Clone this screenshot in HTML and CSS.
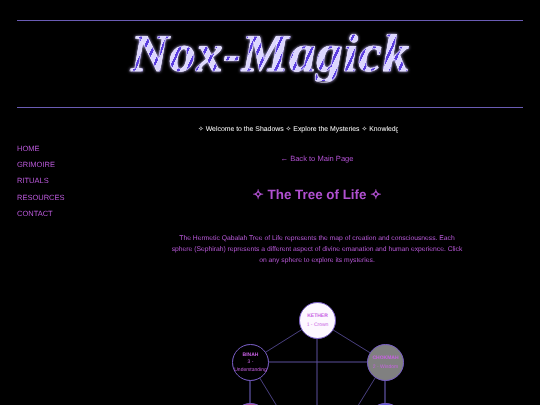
FILE: index.html
```html
<!DOCTYPE html>
<html lang="en">
<head>
<meta charset="utf-8">
<title>The Tree of Life</title>
<link rel="stylesheet" href="styles.css">
</head>
<body>
<div class="page">
  <header class="banner">
    <h1 class="logo">Nox-Magick</h1>
  </header>
  <div class="columns">
    <nav class="side">
      <a href="#">HOME</a>
      <a href="#">GRIMOIRE</a>
      <a href="#">RITUALS</a>
      <a href="#">RESOURCES</a>
      <a href="#">CONTACT</a>
    </nav>
    <main class="content">
      <div class="ticker"><span>✧ Welcome to the Shadows ✧ Explore the Mysteries ✧ Knowledge is Power ✧</span></div>
      <a class="back" href="#">← Back to Main Page</a>
      <h2 class="title">✧ The Tree of Life ✧</h2>
      <p class="intro">The Hermetic Qabalah Tree of Life represents the map of creation and consciousness. Each sphere (Sephirah) represents a different aspect of divine emanation and human experience. Click on any sphere to explore its mysteries.</p>
      <div class="tree">
        <svg class="paths" width="340" height="300" viewBox="0 0 340 300">
          <line x1="170" y1="18" x2="103" y2="60"/>
          <line x1="170" y1="18" x2="238" y2="60"/>
          <line class="mid" x1="170" y1="18" x2="170" y2="300"/>
          <line class="mid" x1="103" y1="60" x2="238" y2="60"/>
          <line class="thick" x1="103" y1="60" x2="103" y2="119"/>
          <line class="thick" x1="238" y1="60" x2="238" y2="119"/>
          <line x1="103" y1="60" x2="170" y2="170"/>
          <line x1="238" y1="60" x2="170" y2="170"/>
        </svg>
        <div class="node kether"><b>KETHER</b><i>1 - Crown</i></div>
        <div class="node binah"><b>BINAH</b><i>3 - Understanding</i></div>
        <div class="node chokmah"><b>CHOKMAH</b><i>2 - Wisdom</i></div>
        <div class="node geburah"></div>
        <div class="node chesed"></div>
      </div>
    </main>
  </div>
</div>
</body>
</html>
```
FILE: styles.css
```css
* { box-sizing: border-box; }
html, body { margin: 0; height: 100%; overflow: hidden; background: #000; }
body {
  font-family: "Liberation Sans", Arial, sans-serif;
  color: #b858d8;
  text-rendering: geometricPrecision;
}
.page { padding: 20px 17px 0; filter: blur(0.3px); }
.banner {
  height: 88px;
  border-top: 1px solid #6a5cb4;
  border-bottom: 1px solid #6a5cb4;
  display: flex;
  align-items: center;
  justify-content: center;
  padding-bottom: 20px;
}
.logo {
  margin: 0;
  font-family: "Liberation Serif", serif;
  font-style: italic;
  font-weight: 700;
  font-size: 53px;
  line-height: 1;
  letter-spacing: 0.5px;
  color: transparent;
  background: repeating-linear-gradient(115deg, #dcd6ff 0 3.5px, #5a3de0 3.5px 6px, #dcd6ff 6px 8px);
  -webkit-background-clip: text;
  background-clip: text;
  -webkit-text-stroke: 0.6px #ece8ff;
  filter: drop-shadow(0 0 1.5px #c9bcff);
}
.columns { display: flex; padding-top: 13px; }
.side {
  width: 94px;
  padding-top: 22px;
  display: flex;
  flex-direction: column;
  gap: 5px;
  font-size: 7.5px;
}
.side a { color: #b858d8; text-decoration: none; line-height: 11.2px; }
.content { flex: 1; display: flex; flex-direction: column; align-items: center; }
.ticker {
  align-self: flex-start;
  margin-left: 87px;
  width: 200px;
  overflow: hidden;
  white-space: nowrap;
  font-size: 6.9px;
  line-height: 17px;
  color: #fff;
}
.back {
  margin-top: 15px;
  font-size: 7.55px;
  line-height: 12px;
  color: #b050d0;
  text-decoration: none;
}
.title {
  margin: 20px 0 0;
  font-size: 13.4px;
  line-height: 20px;
  color: #b050d0;
}
.intro {
  margin: 28px 0 0;
  width: 295px;
  text-align: center;
  font-size: 6.75px;
  line-height: 11px;
}
.tree { position: relative; width: 340px; height: 300px; margin-top: 36px; }
.paths { position: absolute; left: 0; top: 0; }
.paths line { stroke: #4a4080; stroke-width: 1; }
.paths .mid { stroke: #5a4f9a; }
.paths .thick { stroke-width: 1.6; }
.node {
  position: absolute;
  width: 37px;
  height: 37px;
  padding: 0 3px;
  border-radius: 50%;
  border: 1.5px solid #7a5fc8;
  display: flex;
  flex-direction: column;
  align-items: center;
  justify-content: center;
  text-align: center;
  font-size: 5px;
  line-height: 8px;
  color: #c860e4;
  background: #000;
}
.node b, .node i { font-style: normal; display: block; }
.node b { font-weight: 700; margin-bottom: 0.5px; }
.node i { font-weight: 400; }
.binah i { margin: 0 -2px; line-height: 7.6px; }
.kether { left: 152px; top: 0; background: #fdf8ff; }
.binah { left: 85px; top: 42px; }
.chokmah { left: 220px; top: 42px; background: #808080; }
.geburah { left: 85px; top: 101px; background: #b04a8a; }
.chesed { left: 220px; top: 101px; background: #5a50d0; }
```
